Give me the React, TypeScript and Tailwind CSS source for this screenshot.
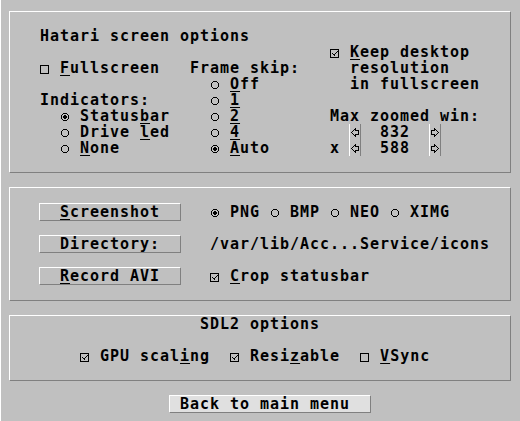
import React from "react";

const U = ({ c }: { c: string }) => (
  <span className="underline decoration-1 underline-offset-[2px]">{c}</span>
);

type Px = [number, number];

const Bits = ({ px }: { px: Px[] }) => (
  <svg width="10" height="16" viewBox="0 0 10 16" className="block" shapeRendering="crispEdges">
    {px.map(([x, y], i) => (
      <rect key={i} x={x} y={y} width="1" height="1" fill="#000" />
    ))}
  </svg>
);

const fromRows = (rows: string[], y0: number): Px[] => {
  const out: Px[] = [];
  rows.forEach((r, j) => {
    for (let i = 0; i < r.length; i++) if (r[i] === "#") out.push([i, y0 + j]);
  });
  return out;
};

const RADIO_OFF = fromRows(
  [
    "...####...",
    "..#....#..",
    ".#......#.",
    ".#......#.",
    ".#......#.",
    ".#......#.",
    "..#....#..",
    "...####...",
  ],
  5
);

const RADIO_ON = fromRows(
  [
    "...####...",
    "..#....#..",
    ".#..##..#.",
    ".#.####.#.",
    ".#.####.#.",
    ".#..##..#.",
    "..#....#..",
    "...####...",
  ],
  5
);

const CHECK_OFF = fromRows(
  [
    "#########.",
    "#.......#.",
    "#.......#.",
    "#.......#.",
    "#.......#.",
    "#.......#.",
    "#.......#.",
    "#.......#.",
    "#########.",
  ],
  5
);

const CHECK_ON = fromRows(
  [
    "#########.",
    "#.......#.",
    "#......##.",
    "#.....#.#.",
    "#.#..#..#.",
    "#..##...#.",
    "#...#...#.",
    "#.......#.",
    "#########.",
  ],
  5
);

const ARROW_L = fromRows(
  [
    ".....#....",
    "....##....",
    "...#.####.",
    "..#.....#.",
    ".#......#.",
    "..#.....#.",
    "...#.####.",
    "....##....",
    ".....#....",
  ],
  4
);

const ARROW_R = fromRows(
  [
    "....#.....",
    "....##....",
    ".####.#...",
    ".#.....#..",
    ".#......#.",
    ".#.....#..",
    ".####.#...",
    "....##....",
    "....#.....",
  ],
  4
);

const Icon = ({ px }: { px: Px[] }) => (
  <span className="inline-block w-[10px] h-4 align-top">
    <Bits px={px} />
  </span>
);

const Radio = ({ on }: { on?: boolean }) => <Icon px={on ? RADIO_ON : RADIO_OFF} />;
const Check = ({ on }: { on?: boolean }) => <Icon px={on ? CHECK_ON : CHECK_OFF} />;

const Arrow = ({ dir, pos }: { dir: "l" | "r"; pos: string }) => (
  <div className={`${pos} -mx-px border-x border-l-white border-r-[#808080]`}>
    <Bits px={dir === "l" ? ARROW_L : ARROW_R} />
  </div>
);

const panel =
  "ml-[8px] w-[502px] border border-t-white border-l-white border-r-[#808080] border-b-[#808080] grid grid-cols-[repeat(50,10px)]";
const btn =
  "-m-px border border-t-white border-l-white border-r-[#808080] border-b-[#808080] whitespace-pre";

export default function App() {
  return (
    <div className="w-[520px] h-[421px] bg-[#c0c0c0] border-l border-white overflow-hidden flex flex-col items-start text-black font-['DejaVu_Sans_Mono',monospace] font-bold text-[15px] tracking-[0.97px] leading-4">
      {/* Panel 1 */}
      <div className={`${panel} mt-[11px] h-[162px] grid-rows-[repeat(10,16px)]`}>
        <div className="col-start-4 col-end-25 row-start-2 whitespace-pre">Hatari screen options</div>

        <div className="col-start-33 col-end-47 row-start-3 whitespace-pre">
          <Check on /> <U c="K" />eep desktop
        </div>
        <div className="col-start-35 col-end-45 row-start-4 whitespace-pre">resolution</div>
        <div className="col-start-35 col-end-48 row-start-5 whitespace-pre">in fullscreen</div>

        <div className="col-start-4 col-end-16 row-start-4 whitespace-pre">
          <Check /> <U c="F" />ullscreen
        </div>
        <div className="col-start-4 col-end-15 row-start-6 whitespace-pre">Indicators:</div>
        <div className="col-start-6 col-end-17 row-start-7 whitespace-pre">
          <Radio on /> Status<U c="b" />ar
        </div>
        <div className="col-start-6 col-end-17 row-start-8 whitespace-pre">
          <Radio /> Drive <U c="l" />ed
        </div>
        <div className="col-start-6 col-end-12 row-start-9 whitespace-pre">
          <Radio /> <U c="N" />one
        </div>

        <div className="col-start-19 col-end-30 row-start-4 whitespace-pre">Frame skip:</div>
        <div className="col-start-21 col-end-26 row-start-5 whitespace-pre">
          <Radio /> <U c="O" />ff
        </div>
        <div className="col-start-21 col-end-24 row-start-6 whitespace-pre">
          <Radio /> <U c="1" />
        </div>
        <div className="col-start-21 col-end-24 row-start-7 whitespace-pre">
          <Radio /> <U c="2" />
        </div>
        <div className="col-start-21 col-end-24 row-start-8 whitespace-pre">
          <Radio /> <U c="4" />
        </div>
        <div className="col-start-21 col-end-27 row-start-9 whitespace-pre">
          <Radio on /> <U c="A" />uto
        </div>

        <div className="col-start-33 col-end-48 row-start-7 whitespace-pre">Max zoomed win:</div>
        <Arrow dir="l" pos="col-start-35 row-start-8" />
        <div className="col-start-38 col-end-41 row-start-8 whitespace-pre">832</div>
        <Arrow dir="r" pos="col-start-43 row-start-8" />
        <div className="col-start-33 col-end-34 row-start-9 whitespace-pre">x</div>
        <Arrow dir="l" pos="col-start-35 row-start-9" />
        <div className="col-start-38 col-end-41 row-start-9 whitespace-pre">588</div>
        <Arrow dir="r" pos="col-start-43 row-start-9" />
      </div>

      {/* Panel 2 */}
      <div className={`${panel} mt-[14px] h-[114px] grid-rows-[repeat(7,16px)]`}>
        <div className={`col-start-4 col-end-18 row-start-2 pl-[20px] ${btn}`}>
          <U c="S" />creenshot
        </div>
        <div className="col-start-21 col-end-45 row-start-2 whitespace-pre">
          <Radio on /> PNG <Radio /> BMP <Radio /> NEO <Radio /> XIMG
        </div>
        <div className={`col-start-4 col-end-18 row-start-4 pl-[20px] ${btn}`}>Directory:</div>
        <div className="col-start-21 col-end-49 row-start-4 whitespace-pre">/var/lib/Acc...Service/icons</div>
        <div className={`col-start-4 col-end-18 row-start-6 pl-[20px] ${btn}`}>
          <U c="R" />ecord AVI
        </div>
        <div className="col-start-21 col-end-37 row-start-6 whitespace-pre">
          <Check on /> <U c="C" />rop statusbar
        </div>
      </div>

      {/* Panel 3 */}
      <div className={`${panel} mt-[14px] h-[66px] grid-rows-[repeat(4,16px)]`}>
        <div className="col-start-20 col-end-32 row-start-1 whitespace-pre">SDL2 options</div>
        <div className="col-start-8 col-end-43 row-start-3 whitespace-pre">
          <Check on /> GPU scal<U c="i" />ng  <Check on /> Resi<U c="z" />able  <Check /> <U c="V" />Sync
        </div>
      </div>

      <div className="mt-[14px] ml-[168px] w-[202px] h-[18px] border border-t-white border-l-white border-r-[#808080] border-b-[#808080] bg-[#e0e0e0] pl-[10px] whitespace-pre">
        Back to main menu
      </div>
    </div>
  );
}
